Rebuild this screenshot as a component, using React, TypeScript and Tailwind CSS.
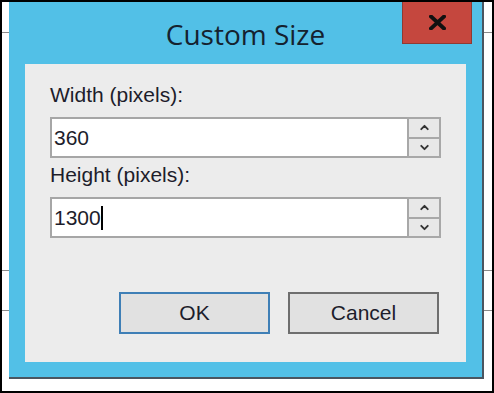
import { ChevronUp, ChevronDown } from "lucide-react";

const fields = [
  { label: "Width (pixels):", value: "360", caret: false },
  { label: "Height (pixels):", value: "1300", caret: true },
];

const Spinner = () => (
  <div className="w-[34px] flex flex-col bg-[#a8a8a8] gap-[2px] p-[2px]">
    <div className="flex-1 bg-[#e8e8e8] flex items-center justify-center text-[#333]">
      <ChevronUp strokeWidth={3.5} className="w-[13px] h-[13px]" />
    </div>
    <div className="flex-1 bg-[#e8e8e8] flex items-center justify-center text-[#333]">
      <ChevronDown strokeWidth={3.5} className="w-[13px] h-[13px]" />
    </div>
  </div>
);

const App = () => {
  return (
    <div className="w-[494px] h-[393px] bg-white border-2 border-black relative overflow-hidden font-['Liberation_Sans',Arial,sans-serif]">
      {/* page lines behind the dialog */}
      <div className="absolute left-0 right-0 top-[30px] h-px bg-[#8a8a8a]" />
      <div className="absolute left-0 right-0 top-[268px] h-px bg-[#8a8a8a]" />
      <div className="absolute left-0 right-0 top-[308px] h-px bg-[#8a8a8a]" />

      <div className="relative ml-[7px] w-[475px] h-[377px] bg-[#52c0e7] border-r-2 border-b-2 border-[#4a5560] flex flex-col">
        <div className="relative h-[62px] flex items-center justify-center">
          <span className="font-['Open_Sans',sans-serif] text-[28px] text-[#15222f] mt-[2px]">
            Custom Size
          </span>
          <div className="absolute right-[10px] top-[-2px] w-[70px] h-[44px] bg-[#c5473e] border border-[#8f3a33] flex items-center justify-center">
            <svg width="17" height="15" viewBox="0 0 17 15">
              <path d="M2 1.5 L15 13.5 M15 1.5 L2 13.5" stroke="#111" strokeWidth="3.8" strokeLinecap="square" />
            </svg>
          </div>
        </div>

        <div className="mx-4 w-[441px] h-[298px] bg-[#ececec] flex flex-col px-[25px] pt-[19px]">
          {fields.map((f, i) => (
            <div key={i} className="flex flex-col">
              <span className="text-[21px] leading-[24px] text-[#1d1d2b] mb-[10px]">{f.label}</span>
              <div className="flex h-[41px] w-[391px] mb-[5px]">
                <div className="flex-1 bg-white border-2 border-[#a6a6a6] border-r-0 flex items-center pl-[2px]">
                  <span className="text-[21px] text-[#1d1d2b]">{f.value}</span>
                  {f.caret && <span className="w-[2px] h-[24px] bg-black" />}
                </div>
                <Spinner />
              </div>
            </div>
          ))}

          <div className="flex justify-end gap-[18px] mt-[49px] pr-[2px]">
            <button className="w-[151px] h-[42px] bg-[#e1e1e1] border-2 border-[#3f7fb6] text-[21px] text-[#1d1d2b]">
              OK
            </button>
            <button className="w-[151px] h-[42px] bg-[#e1e1e1] border-2 border-[#6e6e6e] text-[21px] text-[#1d1d2b]">
              Cancel
            </button>
          </div>
        </div>
      </div>
    </div>
  );
};

export default App;
